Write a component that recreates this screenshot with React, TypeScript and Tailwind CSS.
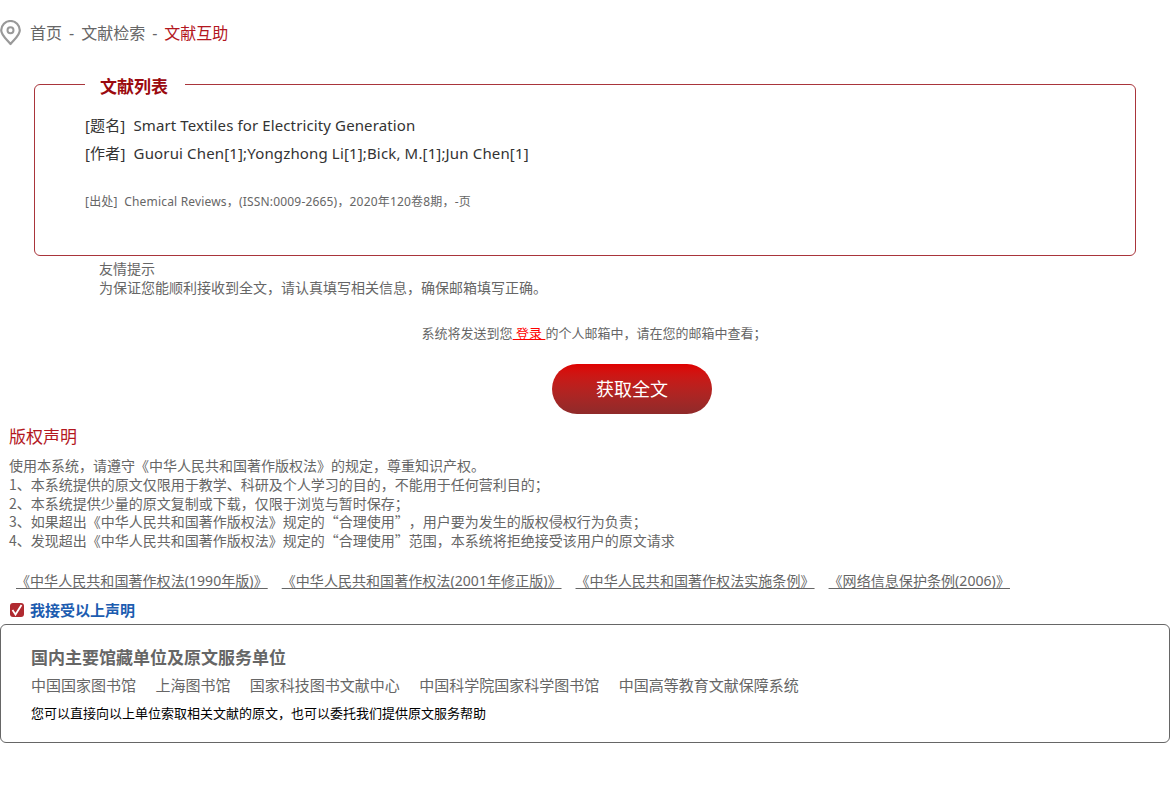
import React from 'react';

const FONT = "font-['Noto_Sans','Noto_Sans_CJK_SC',sans-serif]";
const CJK_FONT = "font-['Noto_Sans_CJK_SC',sans-serif]";

const LAW_LINKS = [
  '《中华人民共和国著作权法(1990年版)》',
  '《中华人民共和国著作权法(2001年修正版)》',
  '《中华人民共和国著作权法实施条例》',
  '《网络信息保护条例(2006)》',
];

const LIBRARIES = [
  '中国国家图书馆',
  '上海图书馆',
  '国家科技图书文献中心',
  '中国科学院国家科学图书馆',
  '中国高等教育文献保障系统',
];

const NOTICE = [
  '使用本系统，请遵守《中华人民共和国著作版权法》的规定，尊重知识产权。',
  '1、本系统提供的原文仅限用于教学、科研及个人学习的目的，不能用于任何营利目的；',
  '2、本系统提供少量的原文复制或下载，仅限于浏览与暂时保存；',
  '3、如果超出《中华人民共和国著作版权法》规定的“合理使用”，用户要为发生的版权侵权行为负责；',
  '4、发现超出《中华人民共和国著作版权法》规定的“合理使用”范围，本系统将拒绝接受该用户的原文请求',
];

const PinIcon = () => (
  <svg width="22" height="26" viewBox="0 0 22 26" fill="none" className="shrink-0">
    <path
      d="M10.500 24C7 19.500 1.200 15.500 1.200 10.300a9.300 9.300 0 0 1 18.600 0C19.800 15.500 14 19.500 10.500 24Z"
      stroke="#999"
      strokeWidth="2.200"
      strokeLinejoin="round"
    />
    <circle cx="10.500" cy="10.300" r="3" stroke="#999" strokeWidth="2" />
  </svg>
);

const CheckedBox = () => (
  <span className="flex h-[14px] w-[14px] shrink-0 items-center justify-center rounded-[3px] bg-[#b02a30]">
    <svg width="14" height="14" viewBox="0 0 14 14" fill="none">
      <path d="M2.500 7 5.500 11.500 11.500 2" stroke="#fff" strokeWidth="1.800" />
    </svg>
  </span>
);

export default function App() {
  return (
    <div className={`${FONT} h-[793px] w-[1170px] overflow-hidden bg-white text-[#666]`}>
      <nav className="mt-[20px] flex h-[26px] items-center text-[16px] leading-[26px]">
        <PinIcon />
        <span className="ml-[8px]">首页</span>
        <span className="mx-[7px]">-</span>
        <span>文献检索</span>
        <span className="mx-[7px]">-</span>
        <span className="text-[#b3171e]">文献互助</span>
      </nav>

      <fieldset className="mt-[23px] ml-[34px] h-[187px] w-[1102px] rounded-[6px] border border-[#a9353b] pl-[50px]">
        <legend className="pt-[6px] pr-[17px] pl-[15px] text-[17px] leading-[24px] font-bold text-[#9b0a0f]">文献列表</legend>
        <p className="mt-[12px] text-[15px] leading-[28px] tracking-[0.12px] text-[#333]">[题名]&nbsp;&nbsp;Smart Textiles for Electricity Generation</p>
        <p className="text-[15px] leading-[28px] tracking-[0.15px] text-[#333]">[作者]&nbsp;&nbsp;Guorui Chen[1];Yongzhong Li[1];Bick, M.[1];Jun Chen[1]</p>
        <p className="mt-[25px] text-[12px] leading-[20px] tracking-[0.18px]">[出处]&nbsp;&nbsp;Chemical Reviews，(ISSN:0009-2665)，2020年120卷8期，-页</p>
      </fieldset>

      <div className="mt-[3px] ml-[99px] text-[14px] leading-[19px]">
        <p>友情提示</p>
        <p>为保证您能顺利接收到全文，请认真填写相关信息，确保邮箱填写正确。</p>
      </div>

      <p className="mt-[26px] ml-[18px] text-center text-[13px] leading-[20px]">
        系统将发送到您<a className="text-[#f00] underline"> 登录 </a>的个人邮箱中，请在您的邮箱中查看；
      </p>

      <button className="mt-[21px] ml-[552px] block h-[50px] w-[160px] rounded-[25px] bg-gradient-to-b from-[#df0000] to-[#8f2a2a] text-[18px] text-white">
        获取全文
      </button>

      <section className="ml-[10px]">
        <h2 className="mt-[11px] -ml-[1px] text-[17px] leading-[24px] font-normal text-[#b3171e]">版权声明</h2>
        <div className={`${CJK_FONT} mt-[7px] -ml-[1px] text-[14px] leading-[18.75px] [text-spacing-trim:space-all]`}>
          {NOTICE.map(line => (
            <p key={line}>{line}</p>
          ))}
        </div>
        <div className="mt-[21px] ml-[6px] flex gap-[14px] text-[14px] leading-[20px] tracking-[0.06px]">
          {LAW_LINKS.map(link => (
            <a key={link} className="underline underline-offset-2">{link}</a>
          ))}
        </div>
        <label className="mt-[9px] flex h-[20px] items-center gap-[6px] text-[15px] font-bold text-[#1c5cb0]">
          <CheckedBox />
          我接受以上声明
        </label>
      </section>

      <div className="mt-[4px] h-[119px] w-[1170px] rounded-[6px] border border-[#666] pt-[20px] pl-[30px]">
        <h3 className="text-[17px] leading-[26px] font-bold text-[#666]">国内主要馆藏单位及原文服务单位</h3>
        <div className="mt-[3px] flex gap-[19.4px] text-[15px] leading-[22px]">
          {LIBRARIES.map(name => (
            <span key={name}>{name}</span>
          ))}
        </div>
        <p className="mt-[7px] text-[13px] leading-[20px] text-black">您可以直接向以上单位索取相关文献的原文，也可以委托我们提供原文服务帮助</p>
      </div>
    </div>
  );
}
